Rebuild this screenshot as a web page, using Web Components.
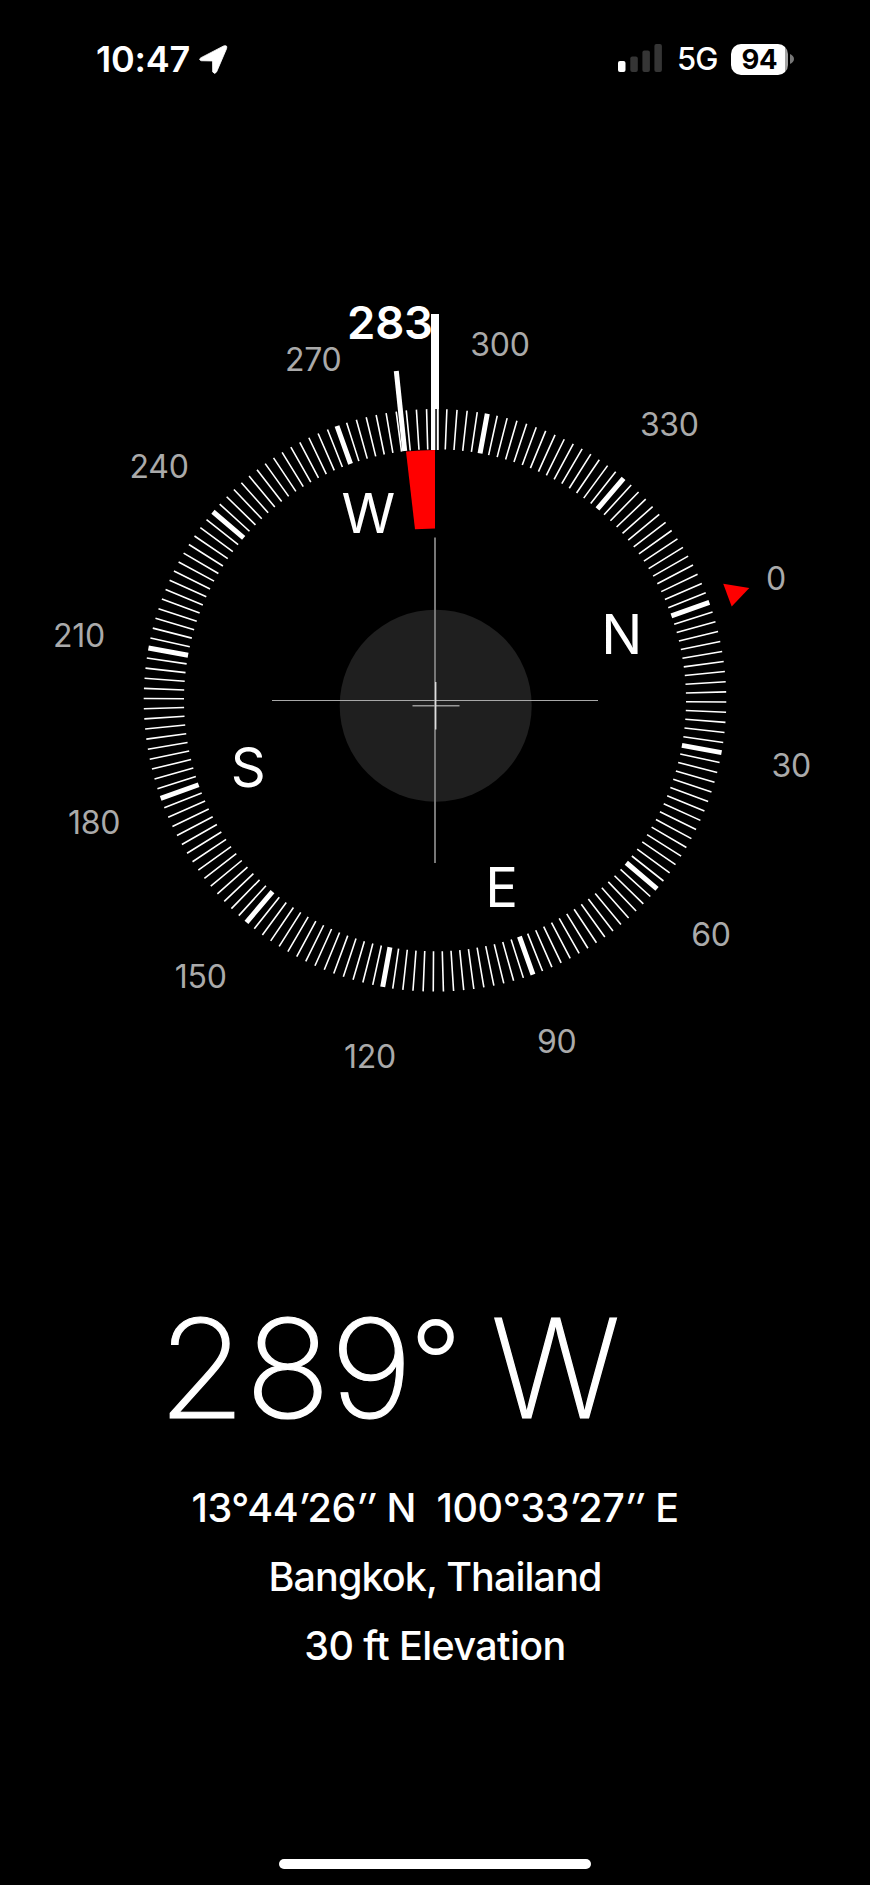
<!DOCTYPE html>
<html lang="en">
<head>
<meta charset="utf-8">
<title>Compass</title>
<style>
html,body{margin:0;padding:0;background:#000}
body{font-family:Inter,"Liberation Sans",sans-serif;color:#fff}
</style>
</head>
<body>
<compass-app></compass-app>
<script>
class StatusBar extends HTMLElement{
  constructor(){
    super();
    this.attachShadow({mode:'open'}).innerHTML=`
<style>
:host{display:flex;justify-content:space-between;align-items:center;height:60px;padding:29px 76px 1px 96px}
.left,.right{display:flex;align-items:center;height:60px}
.time{font-size:36px;font-weight:600;letter-spacing:-.25px;line-height:60px}
.net{font-size:31px;font-weight:500;line-height:60px;width:39px;margin-left:14px;letter-spacing:-1px;white-space:nowrap}
svg{display:block;flex:none}
.arrow{margin-left:8px}
.bars{margin-top:-2px}
.batt{width:57px;height:31px;border-radius:10px;background:linear-gradient(90deg,#fff 0 54px,#a3a3a3 54px);margin-left:15px;color:#000;font-weight:700;font-size:27.5px;line-height:31px;text-align:center;letter-spacing:-.3px}
.cap{margin-left:2px}
</style>
<div class="left"><span class="time">10:47</span>
<svg class="arrow" width="31" height="31" viewBox="0 0 30 30"><path d="M3 13.2 24.8 1.9Q28.8 .6 27.6 4.6L18 27Q16.2 29.9 14.2 27L14.1 16.4 3.3 16.2Q0 15 3 13.2Z" fill="#fff" stroke="#fff" stroke-width=".8" stroke-linejoin="round"/></svg></div>
<div class="right">
<svg class="bars" width="45" height="28" viewBox="0 0 45 28"><rect x="0" y="17" width="7.5" height="11" rx="2" fill="#fff"/><g fill="#353535"><rect x="12.3" y="12.5" width="7.5" height="15.5" rx="2"/><rect x="24.4" y="6.5" width="7.5" height="21.5" rx="2"/><rect x="36.4" y="0" width="7.5" height="28" rx="2"/></g></svg>
<span class="net">5G</span><div class="batt">94</div>
<svg class="cap" width="4" height="10" viewBox="0 0 4 10"><path d="M0 0Q4 2 4 5T0 10Z" fill="#777"/></svg></div>`;
  }
}
class CompassDial extends HTMLElement{
  constructor(){
    super();
    const heading=289.66,cx=435,cy=700.3;
    const at=(deg,r)=>{const a=(deg-heading)*Math.PI/180;return [cx+r*Math.sin(a),cy-r*Math.cos(a)].map(v=>v.toFixed(2));};
    let thin='',thick='',labels='';
    for(let d=0;d<360;d+=2){
      const seg='M'+at(d,251)+'L'+at(d,291.3);
      if(d%30===0)thick+=seg;else thin+=seg;
    }
    for(let d=0;d<360;d+=30){
      const [x,y]=at(d,362);
      labels+=`<text x="${x}" y="${+y+11.8}">${d}</text>`;
    }
    const points=[['N',0],['E',90],['S',180],['W',270]].map(([c,d])=>{const [x,y]=at(d,198.4);return `<text x="${x}" y="${+y+20}">${c}</text>`;}).join('');
    this.attachShadow({mode:'open'}).innerHTML=`
<style>
:host{display:block;height:1010px}
svg{display:block}
text{text-anchor:middle}
.deg{font-size:32px;fill:#aaa;letter-spacing:-.3px}
.pt{font-size:54.5px;fill:#fff}
.bearing{font-size:45.5px;font-weight:600;fill:#fff;text-anchor:start}
</style>
<svg width="870" height="1010" viewBox="0 90 870 1010">
<circle cx="435.7" cy="705.7" r="96" fill="#1f1f1f"/>
<path d="M406 451.5Q420 450 435 450V528.5L415 529.3Z" fill="#f00"/>
<path d="${thin}" stroke="#fff" stroke-width="1.6" fill="none"/>
<path d="${thick}" stroke="#fff" stroke-width="5" fill="none"/>
<path d="M396.3 371 404.7 451" stroke="#fff" stroke-width="5"/>
<path d="M435 409H437V450H435Z" fill="#000"/>
<path d="M431 314H439V409H435.3V450H431Z" fill="#fff"/>
<path d="M437.8 409V450" stroke="#fff" stroke-width="2"/>
<path d="M435 537.5V863" stroke="#777" stroke-width="2"/>
<path d="M272 700.5H598" stroke="#a8a8a8" stroke-width="1.2"/>
<path d="M412.5 705.7H459.5" stroke="#999" stroke-width="1.4"/>
<path d="M435.7 682V729.5" stroke="#ddd" stroke-width="1.4"/>
<path d="M723.2 583.7 749.3 588 731.7 606.5Z" fill="#f00"/>
<g class="deg">${labels}</g><g class="pt">${points}</g>
<text class="bearing" x="347" y="339" textLength="86">283</text>
</svg>`;
  }
}
class CompassReadout extends HTMLElement{
  constructor(){
    super();
    this.attachShadow({mode:'open'}).innerHTML=`
<style>
:host{display:flex;flex-direction:column;align-items:center}
.heading{align-self:flex-start;margin-left:158px;margin-top:183px;height:170px;line-height:170px;font-size:137px;font-weight:200;letter-spacing:-.6px;white-space:pre;-webkit-text-stroke:1.2px #fff}
.info{display:flex;flex-direction:column;align-items:center;margin-top:21px;font-size:39.5px;font-weight:500}
.info div{height:69px;line-height:69px;white-space:pre}
.coords{letter-spacing:-.37px}
.place{letter-spacing:-.9px}
.elev{letter-spacing:-.6px}
::slotted([slot=heading]){display:inline-block;transform:scaleX(1.035);transform-origin:0 50%}
::slotted([slot=degree]){font-size:111px;line-height:0;vertical-align:16px;margin-left:7px;-webkit-text-stroke:2px #fff}
::slotted([slot=cardinal]){margin-left:-7.5px}
</style>
<div class="heading"><slot name="heading"></slot><slot name="degree"></slot> <slot name="cardinal"></slot></div>
<div class="info"><div class="coords"><slot name="coords"></slot></div><div class="place"><slot name="place"></slot></div><div class="elev"><slot name="elevation"></slot></div></div>`;
  }
}
class HomeIndicator extends HTMLElement{
  constructor(){
    super();
    this.attachShadow({mode:'open'}).innerHTML=`<style>:host{display:block;width:312px;height:10px;border-radius:5px;background:#fff;margin:auto auto 16.5px}</style>`;
  }
}
class CompassApp extends HTMLElement{
  constructor(){
    super();
    this.attachShadow({mode:'open'}).innerHTML=`
<style>:host{display:flex;flex-direction:column;width:870px;height:1885px;background:#000;overflow:hidden}
.sec{margin-right:2px}</style>
<status-bar></status-bar><compass-dial></compass-dial>
<compass-readout><span slot="heading">289</span><span slot="degree">°</span><span slot="cardinal">W</span><span slot="coords">13°44<i>′</i>26<i class="sec">″</i> N  100°33<i>′</i>27<i class="sec">″</i> E</span><span slot="place">Bangkok, Thailand</span><span slot="elevation">30 ft Elevation</span></compass-readout>
<home-indicator></home-indicator>`;
  }
}
customElements.define('status-bar',StatusBar);
customElements.define('compass-dial',CompassDial);
customElements.define('compass-readout',CompassReadout);
customElements.define('home-indicator',HomeIndicator);
customElements.define('compass-app',CompassApp);
</script>
</body>
</html>
